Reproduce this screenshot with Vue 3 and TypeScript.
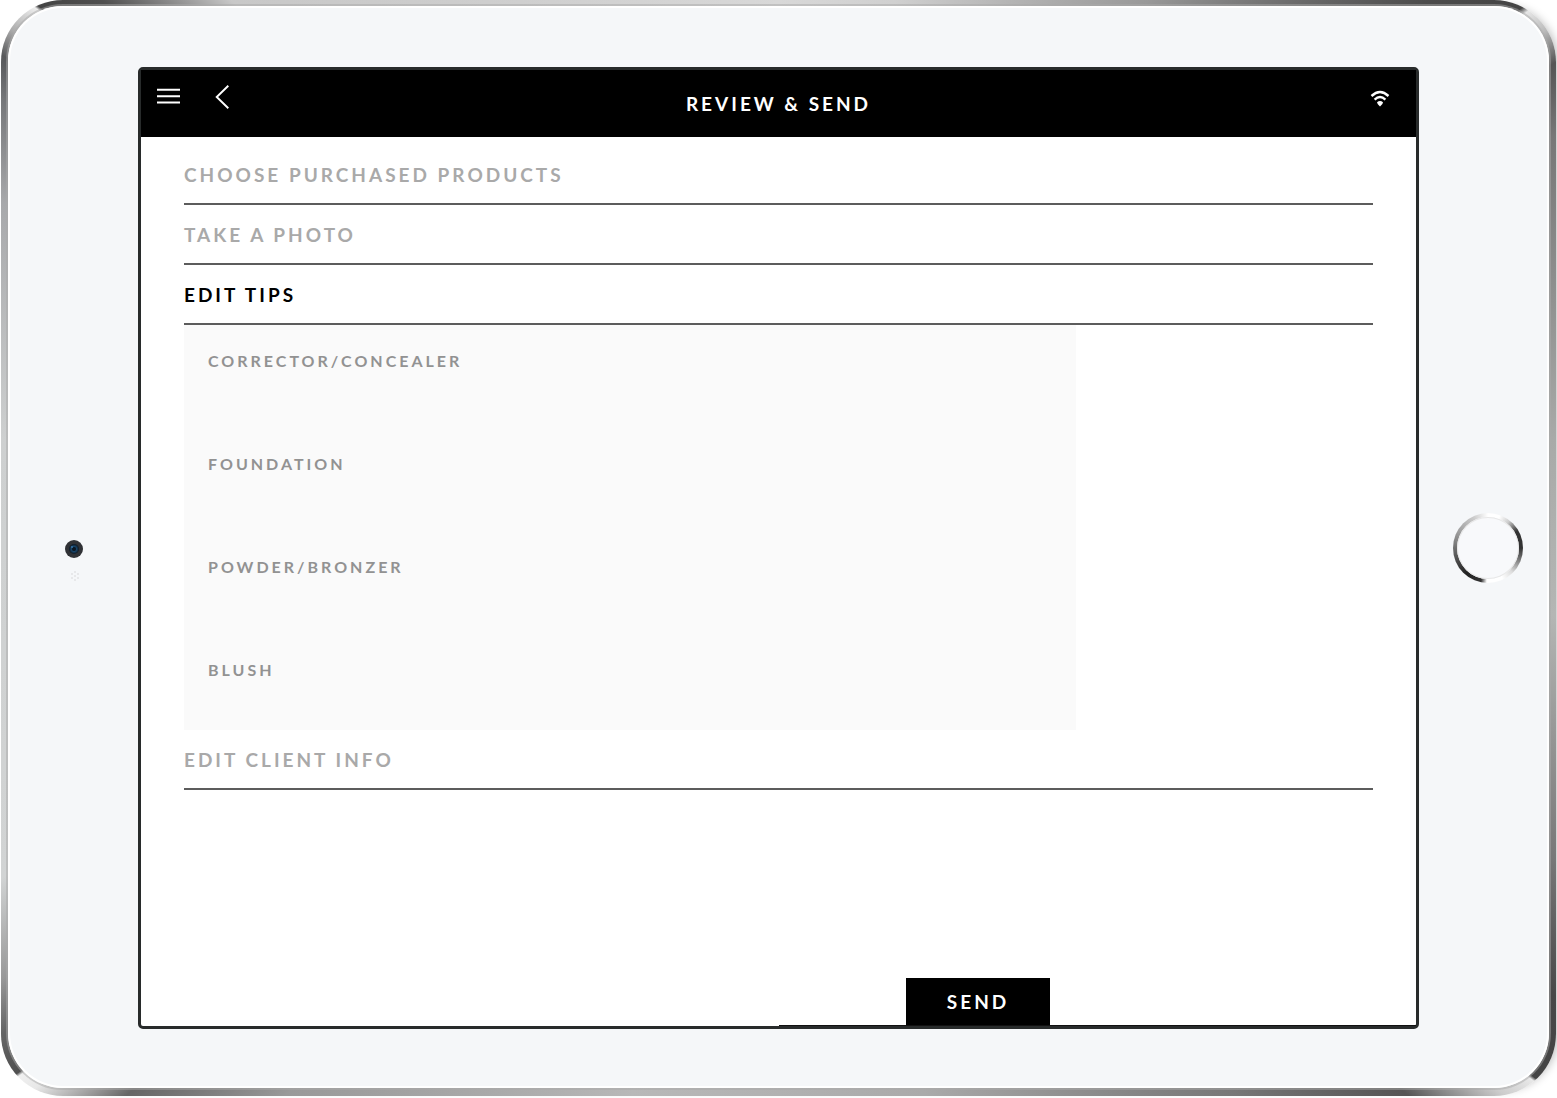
<script setup lang="ts">
import { ref } from 'vue'

interface Section {
  id: string
  title: string
}

interface Tip {
  id: string
  label: string
  text: string
}

const sections: Section[] = [
  { id: 'products', title: 'CHOOSE PURCHASED PRODUCTS' },
  { id: 'photo', title: 'TAKE A PHOTO' },
  { id: 'tips', title: 'EDIT TIPS' },
  { id: 'client', title: 'EDIT CLIENT INFO' },
]

const tips = ref<Tip[]>([
  { id: 'corrector', label: 'CORRECTOR/CONCEALER', text: '' },
  { id: 'foundation', label: 'FOUNDATION', text: '' },
  { id: 'powder', label: 'POWDER/BRONZER', text: '' },
  { id: 'blush', label: 'BLUSH', text: '' },
])

const active = ref('tips')
</script>

<template>
  <div class="stage">
    <div class="tablet">
      <div class="face">
        <div class="side">
          <svg class="camera" width="20" height="46" viewBox="0 0 20 46" aria-hidden="true">
            <defs>
              <radialGradient id="lens">
                <stop offset="0" stop-color="#0c1c2c" />
                <stop offset="0.5" stop-color="#17456b" />
                <stop offset="1" stop-color="#101820" />
              </radialGradient>
            </defs>
            <circle cx="10" cy="10" r="9" fill="#303236" />
            <circle cx="10" cy="10" r="5" fill="url(#lens)" />
            <circle cx="10" cy="10" r="2" fill="#0b1622" />
            <circle cx="8" cy="8" r="1" fill="#3a76a8" />
            <g fill="#e2e3e4">
              <circle cx="11" cy="33" r="1" /><circle cx="8" cy="35" r="1" />
              <circle cx="14" cy="35" r="1" /><circle cx="11" cy="37" r="1" />
              <circle cx="8" cy="39" r="1" /><circle cx="14" cy="39" r="1" />
              <circle cx="11" cy="41" r="1" />
            </g>
          </svg>
        </div>

        <main class="screen">
          <header class="bar">
            <div class="tools">
              <button type="button" class="tool" aria-label="Menu">
                <svg width="23" height="24" viewBox="0 0 23 24"><path d="M0 4.7H23M0 11.2H23M0 17.5H23" fill="none" stroke="#fff" stroke-width="2" /></svg>
              </button>
              <button type="button" class="tool" aria-label="Back">
                <svg width="15" height="24" viewBox="0 0 15 24"><path d="M13.3 .7L1.7 12L13.3 23.3" fill="none" stroke="#fff" stroke-width="1.9" /></svg>
              </button>
            </div>
            <h1 class="title">REVIEW &amp; SEND</h1>
            <svg class="wifi" width="20" height="24" viewBox="0 0 20 24" role="img" aria-label="Wi-Fi connected">
              <g fill="none" stroke="#fff" stroke-width="2.4">
                <path d="M1.5 11Q10 3.2 18.5 11" />
                <path d="M4.6 14.6Q10 9.6 15.4 14.6" />
              </g>
              <path d="M7 17.2Q10 14.6 13 17.2Q13 19 10 21.6Q7 19 7 17.2Z" fill="#fff" />
            </svg>
          </header>

          <div class="content">
            <section v-for="s in sections" :key="s.id">
              <h2 class="row">
                <button
                  type="button"
                  class="row-button"
                  :class="{ active: active === s.id }"
                  :aria-expanded="active === s.id"
                  @click="active = s.id"
                >{{ s.title }}</button>
              </h2>
              <div v-if="s.id === 'tips' && active === 'tips'" class="panel">
                <div v-for="t in tips" :key="t.id" class="tip">
                  <label :for="t.id">{{ t.label }}</label>
                  <textarea :id="t.id" v-model="t.text"></textarea>
                </div>
              </div>
            </section>
          </div>

          <button type="button" class="send">SEND</button>
        </main>

        <div class="side">
          <button type="button" class="home" aria-label="Home"></button>
        </div>
      </div>
    </div>
  </div>
</template>

<style>
body {
  background: #fff;
}
</style>

<style scoped>
* {
  box-sizing: border-box;
}

.stage {
  display: flex;
  min-height: 100vh;
  padding: 0 1px 2px;
  overflow: hidden;
  font-family: Lato, "Liberation Sans", sans-serif;
}

.tablet {
  flex: 1;
  display: flex;
  padding: 6px 7px 8px;
  border-radius: 62px;
  background: conic-gradient(
    #d8d8d8 0deg, #d0d0d0 12deg, #999 34deg, #4c4c4c 50deg, #444 54deg,
    #e6e6e6 54.4deg, #bbb 56deg, #555 58deg, #777 62deg, #a8aaa8 82deg, #b4b6b4 95deg,
    #777 112deg, #484848 120deg, #444 125deg, #e8e8e8 125.2deg, #ccc 127deg,
    #555 131deg, #777 140deg, #aaa 165deg, #b8b8b8 195deg, #999 222deg,
    #666 230deg, #e8e8e8 234deg, #f0f0f0 235.2deg, #505050 235.4deg, #666 238deg,
    #999 241deg, #d2d4d4 247deg, #ced0d0 278deg, #a8a9ab 294deg, #77787a 300deg,
    #58595b 302.4deg, #aaa 304deg, #eee 306deg, #444 306.2deg, #505050 309deg,
    #c8c8c8 315deg, #d8d8d8 360deg
  );
  box-shadow: 8px 0 10px -6px #bbb;
}

.face {
  flex: 1;
  display: grid;
  grid-template-columns: 130px minmax(0, 1fr) 130px;
  padding: 61px 0 59px;
  border-radius: 55px;
  background: #f5f7f9;
  box-shadow: 0 0 0 2px rgba(170, 170, 170, 0.5), inset 0 0 0 2px #fff;
}

.side {
  display: flex;
  align-items: center;
  justify-content: center;
}

.camera {
  margin: 28px 0 0 2px;
}

.home {
  width: 70px;
  height: 70px;
  margin-left: 8px;
  padding: 0;
  border: 4px solid transparent;
  border-radius: 50%;
  background:
    linear-gradient(#f8f9fb, #f8f9fb) padding-box,
    conic-gradient(
      #fff 0deg, #fff 20deg, #ccc 38deg, #333 60deg, #333 90deg, #777 110deg,
      #ddd 135deg, #fff 155deg, #fff 182deg, #333 192deg, #222 220deg, #555 255deg,
      #999 295deg, #ccc 335deg, #fff 360deg
    ) border-box;
  box-shadow: inset 0 0 0 1px #e8e8e8;
}

.screen {
  position: relative;
  display: flex;
  flex-direction: column;
  border: 3px solid #282b2b;
  border-radius: 5px;
  background: #fff;
}

/* thicker lower edge on the right half of the glass */
.screen::after {
  content: "";
  position: absolute;
  right: 0;
  bottom: 0;
  width: 50%;
  height: 1px;
  background: #111;
}

.bar {
  display: grid;
  grid-template-columns: 1fr auto 1fr;
  align-items: center;
  height: 67px;
  background: #000;
  color: #fff;
}

.tools {
  display: flex;
  gap: 35px;
  padding: 0 0 14px 16px;
}

.tool {
  padding: 0;
  border: 0;
  background: none;
}

.tool svg {
  display: block;
}

.title {
  margin: 0;
  font-size: 19px;
  line-height: 24px;
  font-weight: 700;
  letter-spacing: 3px;
}

.wifi {
  justify-self: end;
  margin: 0 26px 14px 0;
}

.content {
  padding: 8px 43px 0;
}

.row {
  margin: 0;
  border-bottom: 2px solid #5c5c5c;
}

.row-button {
  display: block;
  width: 100%;
  height: 58px;
  padding: 2px 0 0;
  border: 0;
  background: none;
  color: #a9a9a9;
  font: 700 19px/24px Lato, "Liberation Sans", sans-serif;
  letter-spacing: 3px;
  text-align: left;
}

.row-button.active {
  color: #000;
}

.panel {
  display: flex;
  flex-direction: column;
  gap: 43px;
  width: 75%;
  padding: 26px 24px 10px;
  background: #fafafa;
}

.tip {
  display: flex;
  flex-direction: column;
}

.tip label {
  color: #929292;
  font-size: 16px;
  line-height: 20px;
  font-weight: 700;
  letter-spacing: 3px;
}

.tip textarea {
  height: 40px;
  padding: 0;
  border: 0;
  background: none;
  color: #333;
  font: 16px/20px Lato, "Liberation Sans", sans-serif;
  resize: none;
}

.send {
  width: 144px;
  height: 48px;
  margin: auto 0 0 60%;
  padding: 0;
  border: 0;
  background: #000;
  color: #fff;
  font: 700 19px/24px Lato, "Liberation Sans", sans-serif;
  letter-spacing: 3px;
}
</style>
